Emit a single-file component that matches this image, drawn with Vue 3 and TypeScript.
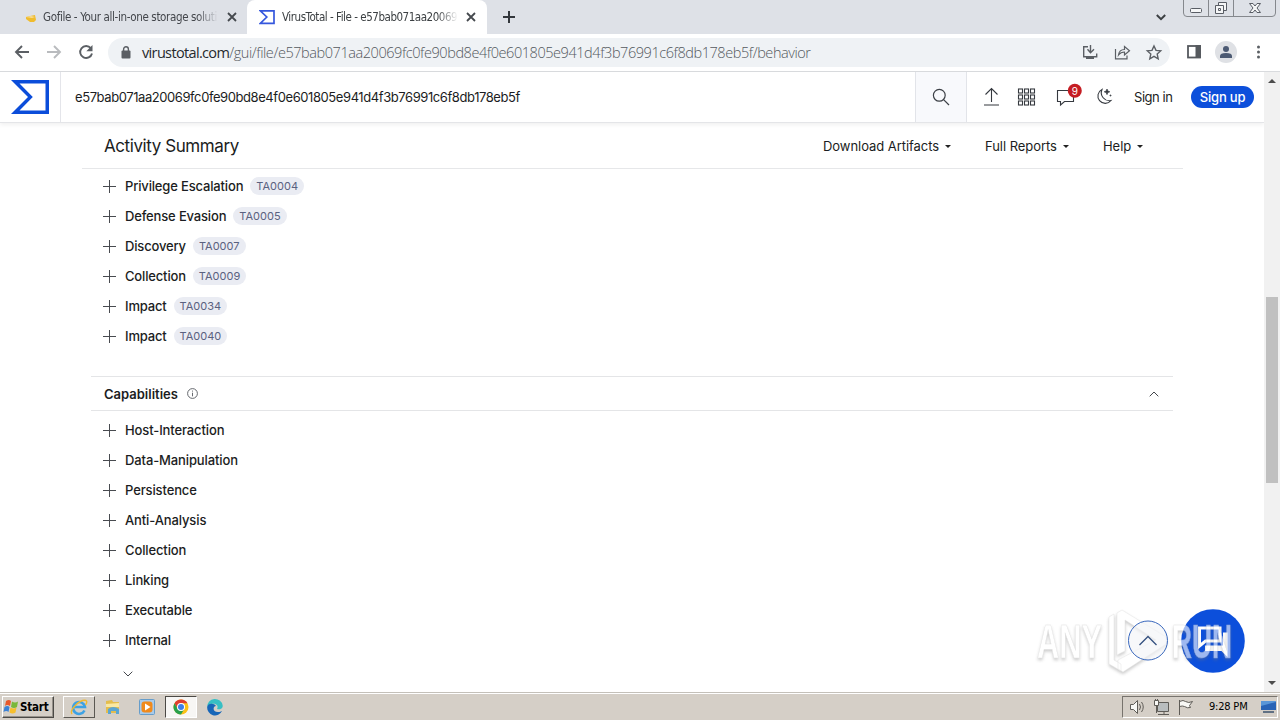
<script setup lang="ts">
interface Tactic {
  name: string
  id: string
}

const tactics: Tactic[] = [
  { name: 'Privilege Escalation', id: 'TA0004' },
  { name: 'Defense Evasion', id: 'TA0005' },
  { name: 'Discovery', id: 'TA0007' },
  { name: 'Collection', id: 'TA0009' },
  { name: 'Impact', id: 'TA0034' },
  { name: 'Impact', id: 'TA0040' },
]

const capabilities: string[] = [
  'Host-Interaction',
  'Data-Manipulation',
  'Persistence',
  'Anti-Analysis',
  'Collection',
  'Linking',
  'Executable',
  'Internal',
]

const hash = 'e57bab071aa20069fc0fe90bd8e4f0e601805e941d4f3b76991c6f8db178eb5f'
const gridCells = [0, 1, 2, 3, 4, 5, 6, 7, 8]
</script>

<template>
  <div class="screen">
    <header class="tabs">
      <div class="tab idle">
        <svg class="fav" width="16" height="16" viewBox="0 0 16 16"><path d="M4 8l4-1 5-1 1 5-2 2H8l-4-3z" fill="#f0bc2e" /><path d="M4 8l5-1 4 1-3 1z" fill="#f8dc92" /></svg>
        <span class="title t1">Gofile - Your all-in-one storage soluti</span>
        <svg class="x" width="10" height="10" viewBox="0 0 10 10"><path d="M1 1l8 8M9 1L1 9" stroke="#45494e" stroke-width="1.8" /></svg>
      </div>
      <div class="tab active">
        <svg class="fav" width="16" height="16" viewBox="0 0 16 16"><path d="M1.3 1.8H15v12.6H1.3L7.8 8z" fill="none" stroke="#3557dd" stroke-width="1.7" /></svg>
        <span class="title t2">VirusTotal - File - e57bab071aa20069</span>
        <svg class="x" width="10" height="10" viewBox="0 0 10 10"><path d="M1 1l8 8M9 1L1 9" stroke="#45494e" stroke-width="1.8" /></svg>
      </div>
      <svg class="newtab" width="12" height="12" viewBox="0 0 12 12"><path d="M6 0v12M0 6h12" stroke="#33373c" stroke-width="2" /></svg>
      <svg class="tabmenu" width="10" height="7" viewBox="0 0 10 7"><path d="M.8 1L5 5.2 9.2 1" fill="none" stroke="#3c4043" stroke-width="2" /></svg>
      <svg class="winbtns" width="94" height="18" viewBox="0 0 94 18">
        <path d="M.5 0v13q0 3.500 3.500 3.500H89q3.500 0 3.500-3.500V0M25.500 0v16M50.500 0v16" fill="none" stroke="#85888d" />
        <g fill="#f5f6f7" stroke="#595d65">
          <rect x="7.500" y="8.500" width="11" height="4" rx="1" />
          <path d="M35.500 2.500h8v8h-8z" /><path d="M32.500 5.500h8v8h-8z" /><path d="M35.500 8.500h2v2h-2z" />
          <path d="M66.500 3.500h3.500l2 2.500 2-2.500h3.500l-3.500 4.500 3.500 4.500H74l-2-2.500-2 2.500h-3.500L70 8z" />
        </g>
      </svg>
    </header>

    <nav class="toolbar">
      <svg width="100" height="37" viewBox="0 0 100 37" fill="none" stroke-width="1.9">
        <path d="M29 18H16.500M22 12l-6 6 6 6" stroke="#5b5f64" />
        <path d="M47 18h12.500M54 12l6 6-6 6" stroke="#b9bbbe" />
        <path d="M90.800 14.200A6 6 0 1 0 92 19.500" stroke="#5b5f64" />
        <path d="M92.500 11v6.200h-6.200z" fill="#5b5f64" />
      </svg>
      <div class="omnibox">
        <svg class="lock" width="10" height="13" viewBox="0 0 10 13"><rect x=".5" y="4.500" width="9" height="8" rx="1" fill="#5b5f64" /><path d="M2.600 5V3.200a2.400 2.400 0 0 1 4.800 0V5" fill="none" stroke="#5b5f64" stroke-width="1.4" /></svg>
        <span class="url"><b>virustotal.com</b><span>/gui/file/{{ hash }}/behavior</span></span>
        <svg class="boxicons" width="90" height="30" viewBox="0 0 90 30" fill="none" stroke="#5b5f64" stroke-width="1.4">
          <path d="M9 8.700H4.700v10h13V15.500M11.500 7v7M8.500 11.200l3 3.500 3.500-3.500M7 20.300h8" />
          <path d="M36.500 11v9.800h11.500V17.500M39.500 17c.5-4 3-5.500 6-5.500V8.500l5 4.200-5 4.300V14c-3 0-4.500 1-6 3z" stroke-width="1.2" />
          <path d="M75 8l2 4.400 4.700.5-3.500 3.200 1 4.700-4.200-2.400-4.200 2.400 1-4.700-3.500-3.200 4.700-.5z" />
        </svg>
      </div>
      <svg class="rightbar" width="100" height="37" viewBox="0 0 100 37">
        <rect x="8" y="12" width="12" height="11.500" fill="none" stroke="#55595e" stroke-width="1.800" /><path d="M15.500 11h5.400v13h-5.400z" fill="#55595e" />
        <circle cx="46" cy="18" r="11" fill="#dfe1e5" /><circle cx="46" cy="15" r="3" fill="#4c5a73" /><path d="M40 24v-2q0-3 6-3t6 3v2z" fill="#4c5a73" />
        <g fill="#5b5f64"><circle cx="78.500" cy="13" r="1.500" /><circle cx="78.500" cy="18" r="1.500" /><circle cx="78.500" cy="23" r="1.500" /></g>
      </svg>
    </nav>

    <div class="view">
      <div class="page">
        <div class="apphead">
          <div class="brand"><svg width="38" height="34" viewBox="0 0 38 34"><path d="M0 0h38v34H0l17-17z" fill="#0b4dda" /><path d="M8.500 3.400h26v27.200h-26L21.800 17z" fill="#fff" /></svg></div>
          <div class="query">{{ hash }}</div>
          <div class="find"><svg width="18" height="18" viewBox="0 0 18 18" fill="none" stroke="#3c4046" stroke-width="1.2"><circle cx="7.300" cy="7.300" r="5.900" /><path d="M11.600 11.600l5.400 5.400" /></svg></div>
          <svg class="actions" width="150" height="50" viewBox="0 0 150 50" fill="none" stroke="#35393f" stroke-width="1.1">
            <path d="M24.500 30V17M18.500 22.500l6-6 6 6M17 33h15" />
            <g>
              <rect v-for="n in gridCells" :key="n" :x="51.5 + (n % 3) * 6" :y="17 + Math.floor(n / 3) * 6" width="4" height="4" />
            </g>
            <path d="M101 18.500H90.500v11h3v3.500l4-3.500h9v-6" />
            <circle cx="107.800" cy="18.800" r="7" fill="#c51d23" stroke="none" />
            <path d="M135 17.500a7.300 7.300 0 1 0 9 11 8 8 0 0 1-9-11z" />
            <path d="M140 17l.8 2 2 .8-2 .8-.8 2-.8-2-2-.8 2-.8zM143.500 22.500v2M142.500 23.500h2" fill="#35393f" stroke-width=".7" />
            <text x="107.800" y="22.500" class="badge">9</text>
          </svg>
          <span class="signin">Sign in</span>
          <span class="signup">Sign up</span>
        </div>

        <div class="summary">
          <h1>Activity Summary</h1>
          <div class="menus">
            <span class="m1">Download Artifacts</span><i />
            <span class="m2">Full Reports</span><i />
            <span class="m3">Help</span><i />
          </div>
        </div>

        <ul class="list tactics">
          <li v-for="t in tactics" :key="t.id">
            <svg width="14" height="14" viewBox="0 0 14 14"><path d="M7.500 1v13M1 7.500h13" stroke="#484b50" /></svg>
            <span class="name">{{ t.name }}</span><span class="chip">{{ t.id }}</span>
          </li>
        </ul>

        <div class="section">
          <h2>Capabilities</h2>
          <svg width="11" height="11" viewBox="0 0 11 11" fill="none" stroke="#55585d" stroke-width=".9"><circle cx="5.500" cy="5.500" r="4.900" /><path d="M5.500 4.700v3.600M5.500 2.600v1" /></svg>
          <svg class="fold" width="10" height="6" viewBox="0 0 10 6"><path d="M.7 5.300L5 1l4.300 4.300" fill="none" stroke="#44474c" stroke-width="1" /></svg>
        </div>

        <ul class="list caps">
          <li v-for="c in capabilities" :key="c">
            <svg width="14" height="14" viewBox="0 0 14 14"><path d="M7.500 1v13M1 7.500h13" stroke="#484b50" /></svg>
            <span class="name">{{ c }}</span>
          </li>
        </ul>
        <svg class="more" width="10" height="6" viewBox="0 0 10 6"><path d="M.7.7L5 5 9.300.7" fill="none" stroke="#44474c" /></svg>
      </div>
      <div class="scroll">
        <svg width="8" height="4" viewBox="0 0 8 4"><path d="M0 4l4-4 4 4z" fill="#4d4d4d" /></svg>
        <div class="thumb" />
        <svg class="down" width="8" height="4" viewBox="0 0 8 4"><path d="M0 0l4 4 4-4z" fill="#4d4d4d" /></svg>
      </div>
    </div>

    <footer class="taskbar">
      <div class="start">
        <svg width="17" height="16" viewBox="0 0 17 16"><path d="M3 2q3-2 5 0L7 7Q4 5 2 7z" fill="#e9592b" /><path d="M9 2.500q3 2 6 0L14 8q-3 2-6 0z" fill="#79b83c" /><path d="M1.500 8q3-2 5 0l-1 5q-2-2-5 0z" fill="#3c82d6" /><path d="M7.500 8.500q3 2 6 0l-1 5q-3 2-6 0z" fill="#f7bf2d" /></svg>
        <b>Start</b>
      </div>
      <div class="task raised">
        <svg width="18" height="18" viewBox="0 0 18 18"><path d="M14.500 12.500A6 6 0 1 1 15 9H4" fill="none" stroke="#3da2e4" stroke-width="2.500" /><path d="M2 16C-1 12 10 1 16 2.500c1.500 1 .5 3-.5 4.500" fill="none" stroke="#f1b92e" stroke-width="1.400" /></svg>
      </div>
      <div class="task">
        <svg width="18" height="18" viewBox="0 0 18 18"><path d="M2 3l6-1 1 2h6v11H2z" fill="#e3bd4e" /><path d="M2 6l13-1v4H2z" fill="#f9e8a2" /><path d="M4 16v-5q5-4 11 0v5h-3v-3H7v3z" fill="#5ba6d2" /></svg>
      </div>
      <div class="task">
        <svg width="18" height="18" viewBox="0 0 18 18"><rect x="1.500" y="1.500" width="15" height="15" rx="1" fill="#a9cbea" stroke="#669dca" /><rect x="3.500" y="3.500" width="11" height="11" rx="3" fill="#f08a1c" /><path d="M7 5.500l5.500 3.500L7 12.500z" fill="#fff" /></svg>
      </div>
      <div class="task pressed">
        <svg width="18" height="18" viewBox="0 0 18 18"><circle cx="9" cy="9" r="7.500" fill="#fbc116" /><path d="M2.500 5.250A7.500 7.500 0 0 1 15.500 5.250H9L5.500 10.500z" fill="#df3e30" /><path d="M2.500 5.250A7.500 7.500 0 0 0 9 16.500l3.300-5.600H5.700z" fill="#28a04c" /><circle cx="9" cy="9" r="4" fill="#fff" /><circle cx="9" cy="9" r="3" fill="#3e7fe8" /></svg>
      </div>
      <div class="task">
        <svg width="18" height="18" viewBox="0 0 18 18"><path d="M1.200 9A7.800 7.800 0 0 1 16.700 7.500C17 11 13 12 11 11c2-3-1-6-5-5Q2.500 7 1.200 9z" fill="#37bfc4" /><path d="M1.200 9C1.500 5 8 4.500 10 8c-3 0-4 6 2 6 2 0 3-.5 4-1A7.800 7.800 0 0 1 1.200 9z" fill="#1766b8" /></svg>
      </div>
      <div class="tray">
        <svg width="72" height="18" viewBox="0 0 72 18" fill="#f8f8f5" stroke="#5f5c57" stroke-width="1">
          <path d="M2.500 6.500h3l4-4v13l-4-4h-3z" /><path d="M11.500 6q2 3 0 6M13.500 4q3.500 5 0 10" fill="none" />
          <path d="M29.500 4.500h11v9h-11z" fill="#b9bdbe" /><path d="M30 16.500h11M36 14v2M28.500 8v7M26.500 2.500h4v5h-4zM27.500 1v2M29.500 1v2" />
          <path d="M51.500 2v15M51.500 3.500q4-2 6 0 3 2 7 0l-3 4 1 2q-3 1-6-1-2-1-5 0z" />
        </svg>
        <span>9:28 PM</span>
        <svg width="17" height="14" viewBox="0 0 17 14"><path d="M1 1h15v9H1z" fill="#2863b6" /><path d="M1 6l15-4V1H1z" fill="#5996d8" /><path d="M3 12h11" stroke="#38506d" stroke-width="1.500" /></svg>
      </div>
    </footer>

    <svg class="floating" width="220" height="90" viewBox="0 0 220 90">
      <circle cx="183" cy="41" r="31.800" fill="#0c4fdb" />
      <path d="M169.500 28H190v13h-14.500l-6 5z" fill="none" stroke="#fff" stroke-width="3" />
      <path d="M193 32.500h4.500V57l-6-6H175v-5.500h18z" fill="#fff" />
      <g class="mark">
        <text x="7" y="58" textLength="65" lengthAdjust="spacingAndGlyphs">ANY</text>
        <text x="142" y="58" textLength="60" lengthAdjust="spacingAndGlyphs">RUN</text>
        <path d="M79 17l5-3v46l7 4v7l-12-7zM87 13l5-3 44 27v7L93 72l-5-3v-9l38-20-31-20v31l-8 4z" />
      </g>
      <circle cx="118" cy="40.500" r="19.500" fill="#f2f4f8" fill-opacity=".65" stroke="#3867bd" stroke-width="1" />
      <path d="M109.500 45l8.500-8.500 8.500 8.500" fill="none" stroke="#35517f" stroke-width="1.300" />
    </svg>
  </div>
</template>

<style>
body {
  margin: 0;
  overflow: hidden;
}
</style>

<style scoped>
* {
  box-sizing: border-box;
}
.screen {
  position: relative;
  width: 1280px;
  height: 720px;
  display: flex;
  flex-direction: column;
  background: #fff;
  color: #1b1d22;
  font-family: Inter, "Liberation Sans", sans-serif;
  white-space: nowrap;
  overflow: hidden;
}
svg {
  display: block;
  flex: none;
}
.tabs {
  height: 34px;
  background: #dee1e7;
  display: flex;
  align-items: center;
  flex: none;
}
.tab {
  height: 34px;
  display: flex;
  align-items: center;
  font: 11.5px "DejaVu Sans Condensed", "DejaVu Sans", sans-serif;
  color: #43464b;
}
.idle {
  width: 247px;
  padding-left: 22px;
}
.active {
  width: 240px;
  padding-left: 12px;
  background: #fff;
  border-radius: 8px 8px 0 0;
  color: #3c4043;
}
.title {
  flex: none;
  margin-left: 5px;
  -webkit-mask-image: linear-gradient(90deg, #000 88%, transparent);
  mask-image: linear-gradient(90deg, #000 88%, transparent);
}
.t1 {
  width: 175px;
  letter-spacing: -0.36px;
}
.t2 {
  width: 176px;
  margin-left: 7px;
  letter-spacing: -0.47px;
}
.x {
  margin-left: 9px;
}
.active .x {
  margin-left: 8px;
}
.newtab {
  margin-left: 16px;
}
.tabmenu {
  margin-left: auto;
}
.winbtns {
  align-self: flex-start;
  margin: 0 3px 0 17px;
}
.toolbar {
  height: 38px;
  border-bottom: 1px solid #d9dbde;
  display: flex;
  align-items: center;
  flex: none;
}
.omnibox {
  margin-left: 8px;
  width: 1062px;
  height: 29px;
  border-radius: 15px;
  background: #eff2f5;
  display: flex;
  align-items: center;
}
.lock {
  margin-left: 13px;
}
.url {
  margin-left: 11px;
  font: 300 14.5px "Open Sans", sans-serif;
  letter-spacing: -0.44px;
  color: #54595e;
}
.url b {
  font-weight: 400;
  letter-spacing: -0.65px;
  color: #26292d;
}
.boxicons {
  margin-left: auto;
  margin-right: 1px;
}
.rightbar {
  margin-left: 10px;
}
.view {
  display: flex;
  height: 620px;
  flex: none;
}
.page {
  width: 1264px;
}
.apphead {
  height: 51px;
  border-bottom: 1px solid #e4e5e8;
  box-shadow: 0 2px 4px #0000000f;
  display: flex;
  align-items: center;
}
.brand {
  width: 61px;
  height: 50px;
  border-right: 1px solid #e4e5ea;
  padding: 8px 0 0 11px;
}
.query {
  width: 854px;
  padding-left: 14px;
  font-size: 13px;
  letter-spacing: -0.42px;
}
.find {
  width: 52px;
  height: 50px;
  border: solid #e2e4e9;
  border-width: 0 1px;
  background: #f8f9fc;
  padding: 16px;
}
.badge {
  font: 10px Inter, sans-serif;
  text-anchor: middle;
  fill: #fff;
  stroke: none;
}
.signin {
  width: 39px;
  margin-left: 17px;
  font-size: 13px;
  letter-spacing: -0.45px;
}
.signup {
  margin-left: 18px;
  width: 63px;
  height: 22px;
  border-radius: 11px;
  background: #0c4fdb;
  color: #fff;
  font: 500 13px/22px Inter, sans-serif;
  letter-spacing: -0.2px;
  text-align: center;
}
.summary {
  margin-left: 82px;
  width: 1101px;
  height: 46px;
  border-bottom: 1px solid #e6e7e9;
  display: flex;
  align-items: center;
}
h1 {
  width: 719px;
  margin: 0 0 0 22px;
  font-size: 17px;
  font-weight: 400;
  letter-spacing: -0.42px;
}
.menus {
  display: flex;
  align-items: center;
  font-size: 13px;
  letter-spacing: -0.05px;
}
.menus i {
  border: 3px solid transparent;
  border-top-color: #222;
  border-bottom: 0;
  margin: 2px 34px 0 5px;
}
.m1 {
  width: 117px;
}
.m2 {
  width: 73px;
}
.m3 {
  width: 29px;
}
.list {
  list-style: none;
  margin: 0;
  padding: 0 0 0 102px;
}
.tactics {
  padding-top: 2px;
}
.caps {
  padding-top: 4px;
}
.list li {
  height: 30px;
  display: flex;
  align-items: center;
}
.name {
  margin-left: 9px;
  font-size: 13px;
  font-weight: 500;
  letter-spacing: -0.12px;
}
.tactics .name {
  letter-spacing: -0.16px;
}
.chip {
  height: 18px;
  margin-left: 7px;
  padding: 0 6px;
  border-radius: 9px;
  background: #eaecf3;
  color: #5a6180;
  font-size: 11px;
  line-height: 18px;
}
.section {
  margin: 25px 0 0 91px;
  width: 1082px;
  height: 35px;
  border: solid #e4e5e7;
  border-width: 1px 0;
  padding-left: 13px;
  display: flex;
  align-items: center;
}
h2 {
  margin: 0 9px 0 0;
  font-size: 13px;
  font-weight: 600;
  letter-spacing: 0;
}
.fold {
  margin: 0 14px 0 auto;
}
.more {
  margin: 16px 0 0 123px;
}
.scroll {
  width: 16px;
  background: #f1f1f1;
  display: flex;
  flex-direction: column;
  align-items: center;
  padding: 7px 0;
}
.thumb {
  width: 12px;
  height: 186px;
  margin-top: 214px;
  background: #c0c0c0;
}
.down {
  margin-top: auto;
}
.taskbar {
  height: 28px;
  background: #d5cfc7;
  border-top: 1px solid #c4c0b9;
  box-shadow: inset 0 1px #fff;
  display: flex;
  align-items: center;
  padding: 2px 2px 2px;
}
.start {
  width: 52px;
  height: 22px;
  border: 1px solid;
  border-color: #fff #4b4945 #4b4945 #fff;
  box-shadow: inset -1px -1px #96918a;
  display: flex;
  align-items: center;
  font: 11.5px "DejaVu Sans Condensed", sans-serif;
  letter-spacing: -0.2px;
  color: #000;
  margin-right: 9px;
}
.task {
  width: 32px;
  height: 22px;
  border: 1px solid transparent;
  display: flex;
  align-items: center;
  justify-content: center;
  margin-right: 2px;
}
.raised {
  border-color: #fff #5b5852 #5b5852 #fff;
}
.pressed {
  border-color: #4b4945 #fff #fff #4b4945;
  background: #f7f6f4;
}
.tray {
  margin-left: auto;
  width: 156px;
  height: 22px;
  border: 1px solid;
  border-color: #77736d #fff #fff #77736d;
  display: flex;
  align-items: center;
  padding-left: 5px;
  font: 11px "DejaVu Sans Condensed", sans-serif;
  color: #000;
}
.tray span {
  width: 40px;
  margin: 0 11px 0 9px;
  letter-spacing: -0.2px;
}
.floating {
  position: absolute;
  left: 1030px;
  top: 600px;
}
.mark {
  font: bold 49px "Liberation Sans Narrow", "Liberation Sans", sans-serif;
  fill: #fff;
  stroke: #d2d2d2;
  stroke-width: 0.5;
  opacity: 0.6;
  filter: drop-shadow(0 2px 1.5px #7779);
}
</style>
